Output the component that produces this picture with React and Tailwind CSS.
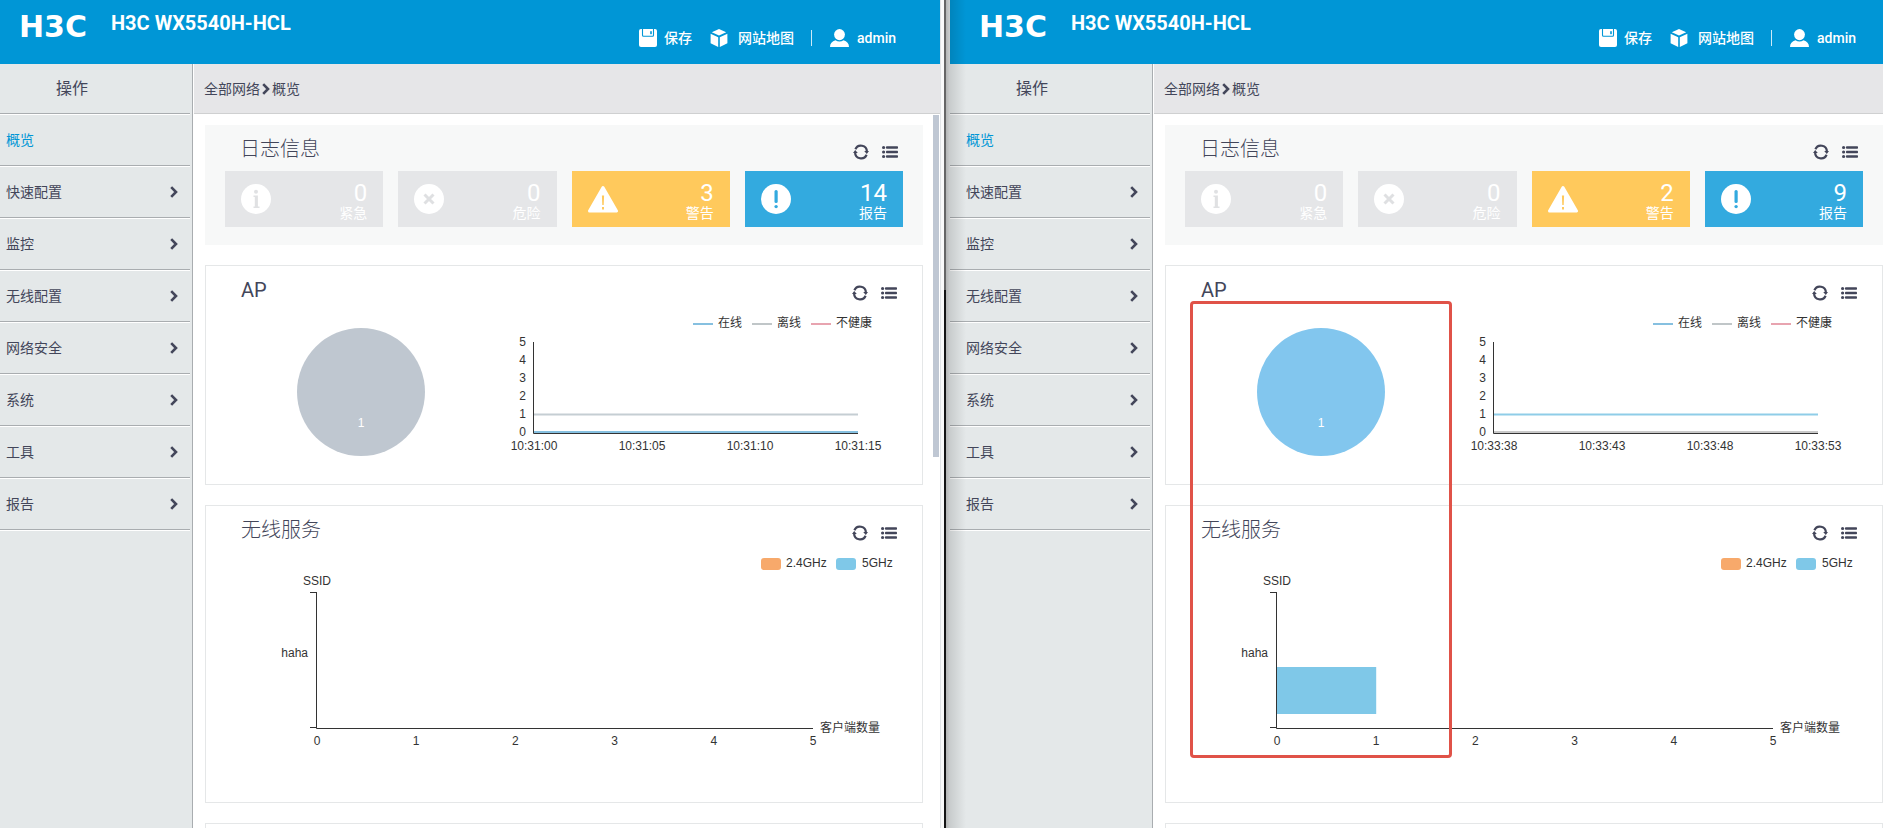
const CJK = 'font-["Liberation_Sans","Noto_Sans_CJK_SC",sans-serif]';
const UI = 'font-[Roboto,"Noto_Sans_CJK_SC",sans-serif]';

const MENU = ['概览', '快速配置', '监控', '无线配置', '网络安全', '系统', '工具', '报告'];

function Chevron() {
  return (
    <svg className="h-3 w-2 shrink-0" viewBox="0 0 8 12" fill="none" stroke="#43465a" strokeWidth="2.6" aria-hidden="true">
      <path d="M1.2 1.2 6 6 1.2 10.8" />
    </svg>
  );
}

function RefreshIcon() {
  return (
    <svg className="h-4 w-4" viewBox="0 0 16 16" aria-hidden="true">
      <g fill="none" stroke="#43465a" strokeWidth="2.2">
        <path d="M2.400 5.200A6 6 0 0 1 13.900 7.500" />
        <path d="M13.600 10.800A6 6 0 0 1 2.100 8.500" />
      </g>
      <path d="M11.200 7H16l-2.200 3zM4.800 9H0l2.200-3z" fill="#43465a" />
    </svg>
  );
}

function ListIcon() {
  return (
    <svg className="h-4 w-4" viewBox="0 0 16 16" fill="#43465a" aria-hidden="true">
      {[2, 6.5, 11].map((y) => (
        <g key={y}>
          <circle cx="1.6" cy={y + 1.5} r="1.6" />
          <rect x="4" y={y + 0.3} width="12" height="2.4" rx="0.8" />
        </g>
      ))}
    </svg>
  );
}

function SaveIcon() {
  return (
    <svg className="h-[18px] w-[18px]" viewBox="0 0 18 18" aria-hidden="true">
      <path d="M2 0h14a2 2 0 0 1 2 2v14a2 2 0 0 1-2 2H2a2 2 0 0 1-2-2V2a2 2 0 0 1 2-2z" fill="#fff" />
      <path d="M3.5 0v6.3a1 1 0 0 0 1 1h9a1 1 0 0 0 1-1V0" fill="none" stroke="#0096d6" strokeWidth="1.1" />
      <rect x="11.2" y="2.2" width="1.6" height="3" fill="#0096d6" />
    </svg>
  );
}

function CubeIcon() {
  return (
    <svg className="h-[18px] w-[18px]" viewBox="0 0 18 18" fill="#fff" aria-hidden="true">
      <path d="M9 0l7.2 3.2L9 6.6 1.8 3.2z" />
      <path d="M.6 4.8 8.2 8.3V18L.6 14.2z" />
      <path d="M17.4 4.8 9.8 8.3V18l7.6-3.8z" />
    </svg>
  );
}

function UserIcon() {
  return (
    <svg className="h-[18px] w-[19px]" viewBox="0 0 19 18" fill="#fff" aria-hidden="true">
      <ellipse cx="9.5" cy="5.6" rx="5.4" ry="5.6" />
      <path d="M0 18c0-3.600 2-5.800 5.500-6.800 2.500 1.600 5.500 1.600 8 0C17 12.200 19 14.400 19 18z" />
    </svg>
  );
}

function StatusIcon({ kind }) {
  if (kind === 'warning') {
    return (
      <svg className="h-[30px] w-[30px]" viewBox="0 0 30 30" aria-hidden="true">
        <path d="M15 3.500 28.500 27H1.500z" fill="#fff" stroke="#fff" strokeWidth="3" strokeLinejoin="round" />
        <path d="M13.900 11.500h2.200l-.4 9.500h-1.400zM14 23h2v2.500h-2z" fill="#ffc95c" />
      </svg>
    );
  }
  return (
    <svg className="h-[30px] w-[30px]" viewBox="0 0 30 30" aria-hidden="true">
      <circle cx="15" cy="15" r="15" fill="#fff" />
      {kind === 'info' && (
        <g fill="#e0e1e3">
          <circle cx="15" cy="7.800" r="2" />
          <path d="M12.500 11.500h4.400v11h1.600v1.500h-6v-1.500h1.300v-9.500h-1.300z" />
        </g>
      )}
      {kind === 'danger' && <path d="M10.500 10.500l9 9M19.500 10.500l-9 9" stroke="#dfe0e2" strokeWidth="3" />}
      {kind === 'report' && (
        <g fill="#33aadf">
          <rect x="13.500" y="6" width="3.200" height="13" rx="1.500" />
          <circle cx="15.100" cy="22.600" r="1.700" />
        </g>
      )}
    </svg>
  );
}

function PanelHead({ title }) {
  return (
    <div className="flex h-12 items-center justify-between pr-[25px] pl-[35px]">
      <h2 className={`text-xl leading-6 text-[#43465a] ${title === 'AP' ? 'font-normal' : 'font-light'} ${UI}`}>{title}</h2>
      <div className="flex gap-[13px] pt-1.5">
        <button type="button" aria-label="刷新" className="h-4 w-4"><RefreshIcon /></button>
        <button type="button" aria-label="详情" className="h-4 w-4"><ListIcon /></button>
      </div>
    </div>
  );
}

function LogCard({ kind, tone, count, label }) {
  return (
    <a href="#log" className={`flex h-14 items-center justify-between px-4 text-white ${tone}`}>
      <StatusIcon kind={kind} />
      <span className={`flex flex-col items-end pt-1 ${UI}`}>
        <span className="text-2xl leading-6">{count}</span>
        <span className="text-sm leading-4">{label}</span>
      </span>
    </a>
  );
}

function ApChart({ pieColor, times, oneColor, zeroColor }) {
  const legend = [
    { x: 487, color: '#86c0e0', name: '在线' },
    { x: 546, color: '#c0c6c8', name: '离线' },
    { x: 605, color: '#e8a4b0', name: '不健康' },
  ];
  return (
    <svg className={`block h-[170px] w-full text-xs ${CJK}`} viewBox="0 0 716 170" fill="#333" role="img" aria-label="AP">
      {legend.map((item) => (
        <g key={item.name}>
          <path d={`M${item.x} 10h20`} stroke={item.color} strokeWidth="2" />
          <text x={item.x + 25} y="13">{item.name}</text>
        </g>
      ))}
      <circle cx="155" cy="78" r="64" fill={pieColor} />
      <text x="155" y="113" textAnchor="middle" fill="#fff">1</text>
      {[0, 1, 2, 3, 4, 5].map((n) => (
        <text key={n} x="320" y={122 - n * 18} textAnchor="end">{n}</text>
      ))}
      <path d="M328 100.500h324" stroke={oneColor} strokeWidth="2" />
      <path d="M328 118h324" stroke={zeroColor} strokeWidth="2" />
      <path d="M327.500 28v91.500h324.500" fill="none" stroke="#333" />
      {times.map((t, i) => (
        <text key={t} x={328 + i * 108} y="136" textAnchor="middle">{t}</text>
      ))}
    </svg>
  );
}

function ServiceChart({ clients }) {
  const step = 99.2;
  return (
    <svg className={`block h-[248px] w-full text-xs ${CJK}`} viewBox="0 0 716 248" fill="#333" role="img" aria-label="无线服务">
      <rect x="555" y="4" width="20" height="12" rx="3" fill="#f7a96b" />
      <text x="580" y="13">2.4GHz</text>
      <rect x="630" y="4" width="20" height="12" rx="3" fill="#7fc8e8" />
      <text x="656" y="13">5GHz</text>
      <text x="111" y="31" textAnchor="middle">SSID</text>
      <text x="102" y="103" textAnchor="end">haha</text>
      {clients > 0 && <rect x="111" y="113" width={clients * step} height="47" fill="#7fc8e8" />}
      <path d="M104 38.500h6.500M104 173.500h6.500M110.500 38v136.500h496.500" fill="none" stroke="#333" />
      {[0, 1, 2, 3, 4, 5].map((n) => (
        <text key={n} x={111 + n * step} y="191" textAnchor="middle">{n}</text>
      ))}
      <text x="614" y="178">客户端数量</text>
    </svg>
  );
}

function Console({ second, warnings, reports, ap, clients }) {
  return (
    <section className="relative flex min-w-0 flex-col overflow-hidden bg-white">
      <header className={`flex h-16 shrink-0 items-start justify-between bg-[#0096d6] text-white ${second ? 'pr-[27px] pl-[29px]' : 'pr-11 pl-[19px]'}`}>
        <div className="flex">
          <span className='pt-3 font-["DejaVu_Sans",sans-serif] text-[30px] leading-[30px] font-bold'>H3C</span>
          <h1 className={`pt-[11px] pl-6 text-xl leading-6 font-bold ${UI}`}>H3C WX5540H-HCL</h1>
        </div>
        <div className={`flex items-center pt-[29px] text-sm leading-[18px] font-medium ${UI}`}>
          <button type="button" className="flex items-center gap-[7px]"><SaveIcon />保存</button>
          <a href="#map" className="ml-[18px] flex items-center gap-[10px]"><CubeIcon />网站地图</a>
          <span className="ml-[17px] h-4 w-px bg-white/80" />
          <button type="button" className="ml-[18px] flex items-center gap-2"><UserIcon />admin</button>
        </div>
      </header>

      <div className="flex min-h-0 flex-1">
        <aside className={`shrink-0 border-r border-[#a9adb0] bg-[#e4e8e9] pr-0.5 ${second ? 'w-[203px]' : 'w-[193px]'}`}>
          <div className={`flex h-[51px] items-center border-b border-white text-base leading-6 text-[#43465a] shadow-[inset_0_-1px_0_#a9adb0] ${second ? 'pl-[66px]' : 'pl-14'}`}>操作</div>
          <nav>
            {MENU.map((name, i) => (
              <a
                key={name}
                href="#menu"
                className={`flex h-13 items-center justify-between border-b border-white pr-3 pb-0.5 text-sm shadow-[inset_0_-1px_0_#a9adb0] ${second ? 'pl-4' : 'pl-1.5'} ${i === 0 ? 'text-[#0096d6]' : 'text-[#43465a]'}`}
              >
                {name}
                {i > 0 && <Chevron />}
              </a>
            ))}
          </nav>
        </aside>

        <main className="ml-px flex min-w-0 flex-1 flex-col">
          <div className="flex h-[50px] shrink-0 items-center gap-0.5 border-b border-[#cfd0d1] bg-[#e6e6e8] pl-2.5 text-sm text-[#43465a]">
            <a href="#all">全部网络</a>
            <Chevron />
            <span>概览</span>
          </div>
          <div className="flex min-h-0 flex-1">
            <div className={`flex min-w-0 flex-1 flex-col gap-5 overflow-hidden pt-[11px] pl-[11px] ${second ? '' : 'pr-2.5'}`}>
              <div className="h-[120px] shrink-0 bg-[#f7f8f8]">
                <PanelHead title="日志信息" />
                <div className="-mt-0.5 grid grid-cols-4 gap-[15px] px-5">
                  <LogCard kind="info" tone="bg-[#e5e6e8]" count="0" label="紧急" />
                  <LogCard kind="danger" tone="bg-[#e5e6e8]" count="0" label="危险" />
                  <LogCard kind="warning" tone="bg-[#ffc95c]" count={warnings} label="警告" />
                  <LogCard kind="report" tone="bg-[#33aadf]" count={reports} label="报告" />
                </div>
              </div>
              <div className="shrink-0 border border-[#e5e7e8]">
                <PanelHead title="AP" />
                <ApChart {...ap} />
              </div>
              <div className="shrink-0 border border-[#e5e7e8]">
                <PanelHead title="无线服务" />
                <ServiceChart clients={clients} />
              </div>
              <div className="h-40 shrink-0 border border-[#e5e7e8]" />
            </div>
            {!second && (
              <div className="w-[7px] shrink-0 pt-px pr-px">
                <div className="h-[342px] bg-[#bfc7d3]" />
              </div>
            )}
          </div>
        </main>
      </div>

      {second && (
        <>
          <div className="pointer-events-none absolute top-0 bottom-0 left-0 w-4 bg-linear-to-r from-black/12 to-transparent" />
          <div className="pointer-events-none absolute top-[301px] left-[240px] h-[457px] w-[262px] rounded border-3 border-[#e05248]" />
        </>
      )}
    </section>
  );
}

export default function App() {
  return (
    <div className={`grid h-screen grid-cols-[940fr_10px_933fr] overflow-hidden ${CJK}`}>
      <Console
        warnings="3"
        reports="14"
        clients={0}
        ap={{
          pieColor: '#bfc7d0',
          times: ['10:31:00', '10:31:05', '10:31:10', '10:31:15'],
          oneColor: '#c5ced3',
          zeroColor: '#86c0e0',
        }}
      />
      <div className="flex">
        <div className="w-1 border-l border-[#e2e4e6] bg-[#fafafa]" />
        <div className="w-0.5 bg-linear-to-b from-[#666] from-35% to-[#151515] to-35%" />
        <div className="w-1 bg-linear-to-r from-[#b4b6b6] to-[#cdcfcf]" />
      </div>
      <Console
        second
        warnings="2"
        reports="9"
        clients={1}
        ap={{
          pieColor: '#82c6ee',
          times: ['10:33:38', '10:33:43', '10:33:48', '10:33:53'],
          oneColor: '#8fcde8',
          zeroColor: '#c9c9c9',
        }}
      />
    </div>
  );
}
